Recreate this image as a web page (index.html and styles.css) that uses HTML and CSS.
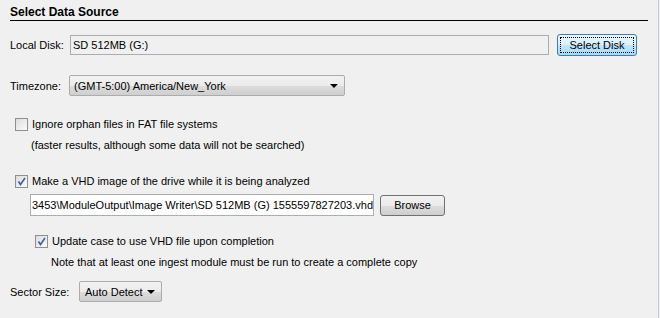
FILE: index.html
```html
<!DOCTYPE html>
<html>
<head>
	<meta charset="utf-8" />
	<title>Select Data Source</title>
	<link rel="stylesheet" href="styles.css">
</head>
<body>
<div class="panel">
	<div class="titulo">Select Data Source</div>

	<div class="fila fila-disco">
		<span class="etiqueta etq-disco">Local Disk:</span>
		<div class="campo campo-disco">SD 512MB (G:)</div>
		<div class="boton boton-foco">Select Disk</div>
	</div>

	<div class="fila fila-zona">
		<span class="etiqueta etq-zona">Timezone:</span>
		<div class="combo combo-zona">
			<span>(GMT-5:00) America/New_York</span>
			<span class="flecha"></span>
		</div>
	</div>

	<div class="fila fila-huerfanos">
		<span class="check"></span>
		<span>Ignore orphan files in FAT file systems</span>
	</div>
	<div class="nota nota-huerfanos">(faster results, although some data will not be searched)</div>

	<div class="fila fila-vhd">
		<span class="check marcado">
			<svg width="9" height="9" viewBox="0 0 9 9"><path d="M1.5 4.5 L3.5 7.5 L8 1" fill="none" stroke="#3c5fa8" stroke-width="1.6"/></svg>
		</span>
		<span>Make a VHD image of the drive while it is being analyzed</span>
	</div>

	<div class="fila fila-ruta">
		<div class="campo campo-ruta">3453\ModuleOutput\Image Writer\SD 512MB (G) 1555597827203.vhd</div>
		<div class="boton boton-ruta">Browse</div>
	</div>

	<div class="fila fila-caso">
		<span class="check marcado">
			<svg width="9" height="9" viewBox="0 0 9 9"><path d="M1.5 4.5 L3.5 7.5 L8 1" fill="none" stroke="#3c5fa8" stroke-width="1.6"/></svg>
		</span>
		<span>Update case to use VHD file upon completion</span>
	</div>
	<div class="nota nota-caso">Note that at least one ingest module must be run to create a complete copy</div>

	<div class="fila fila-sector">
		<span class="etiqueta etq-sector">Sector Size:</span>
		<div class="combo combo-sector">
			<span>Auto Detect</span>
			<span class="flecha"></span>
		</div>
	</div>
</div>
</body>
</html>
```

FILE: styles.css
```css
body {
	margin: 0;
	background-color: #f0f0f0;
	font-family: "Liberation Sans", Arial, sans-serif;
	font-size: 11px;
	color: #000;
}
.panel {
	width: 659px;
	height: 318px;
	border-right: 1px solid #c3cfdc;
	padding-left: 10px;
	box-sizing: border-box;
	padding-top: 6px;
}
.titulo {
	width: 638px;
	font-weight: bold;
	font-size: 12px;
	line-height: 13px;
	padding-bottom: 1px;
	border-bottom: 1px solid #000;
}
.fila {
	display: flex;
	align-items: center;
}
.etiqueta {
	flex: none;
}
.fila-disco {
	margin-top: 13px;
	height: 22px;
}
.etq-disco {
	width: 60px;
}
.campo {
	box-sizing: border-box;
	border: 1px solid #abadb3;
	height: 20px;
	line-height: 18px;
	padding-left: 2px;
	white-space: nowrap;
	overflow: hidden;
}
.campo-disco {
	width: 479px;
	background-color: #f0f0f0;
}
.boton {
	box-sizing: border-box;
	height: 22px;
	border: 1px solid #707070;
	border-radius: 3px;
	background: linear-gradient(#f2f2f2 0%, #ebebeb 50%, #dddddd 51%, #cfcfcf 100%);
	text-align: center;
	line-height: 20px;
}
.boton-foco {
	margin-left: 8px;
	width: 80px;
	border-color: #3c7fb1;
	background: linear-gradient(#eaf6fd 0%, #d9f0fc 50%, #bee6fd 51%, #a7d9f5 100%);
	position: relative;
}
.boton-foco::after {
	content: "";
	position: absolute;
	left: 2px;
	top: 2px;
	right: 2px;
	bottom: 2px;
	border: 1px dotted #000;
}
.fila-zona {
	margin-top: 19px;
	height: 21px;
}
.etq-zona {
	width: 59px;
}
.combo {
	box-sizing: border-box;
	height: 21px;
	border: 1px solid #acacac;
	border-radius: 2px;
	background: linear-gradient(#f2f2f2 0%, #ebebeb 50%, #dddddd 51%, #cfcfcf 100%);
	display: flex;
	align-items: center;
	justify-content: space-between;
	padding-left: 4px;
	padding-right: 6px;
}
.flecha {
	width: 0;
	height: 0;
	border-left: 4px solid transparent;
	border-right: 4px solid transparent;
	border-top: 4px solid #000;
}
.combo-zona {
	width: 276px;
}
.check {
	box-sizing: border-box;
	width: 13px;
	height: 13px;
	border: 1px solid #8e8f8f;
	background: linear-gradient(135deg, #dcdcdc, #fbfbfb);
	margin-right: 4px;
	display: flex;
	align-items: center;
	justify-content: center;
	flex: none;
}
.fila-huerfanos {
	margin-top: 21px;
	height: 14px;
	padding-left: 5px;
}
.nota {
	height: 14px;
	line-height: 14px;
}
.nota-huerfanos {
	margin-top: 7px;
	padding-left: 21px;
}
.fila-vhd {
	margin-top: 22px;
	height: 14px;
	padding-left: 5px;
}
.fila-ruta {
	margin-top: 6px;
	padding-left: 20px;
	height: 22px;
}
.campo-ruta {
	width: 344px;
	height: 22px;
	line-height: 20px;
	background-color: #fff;
	padding-left: 1px;
}
.boton-ruta {
	margin-left: 6px;
	width: 65px;
	height: 21px;
	line-height: 19px;
}
.fila-caso {
	margin-top: 18px;
	height: 14px;
	padding-left: 25px;
}
.nota-caso {
	margin-top: 7px;
	padding-left: 41px;
}
.fila-sector {
	margin-top: 12px;
	height: 21px;
}
.etq-sector {
	width: 69px;
}
.combo-sector {
	width: 83px;
	padding-left: 5px;
	padding-right: 6px;
}
```
